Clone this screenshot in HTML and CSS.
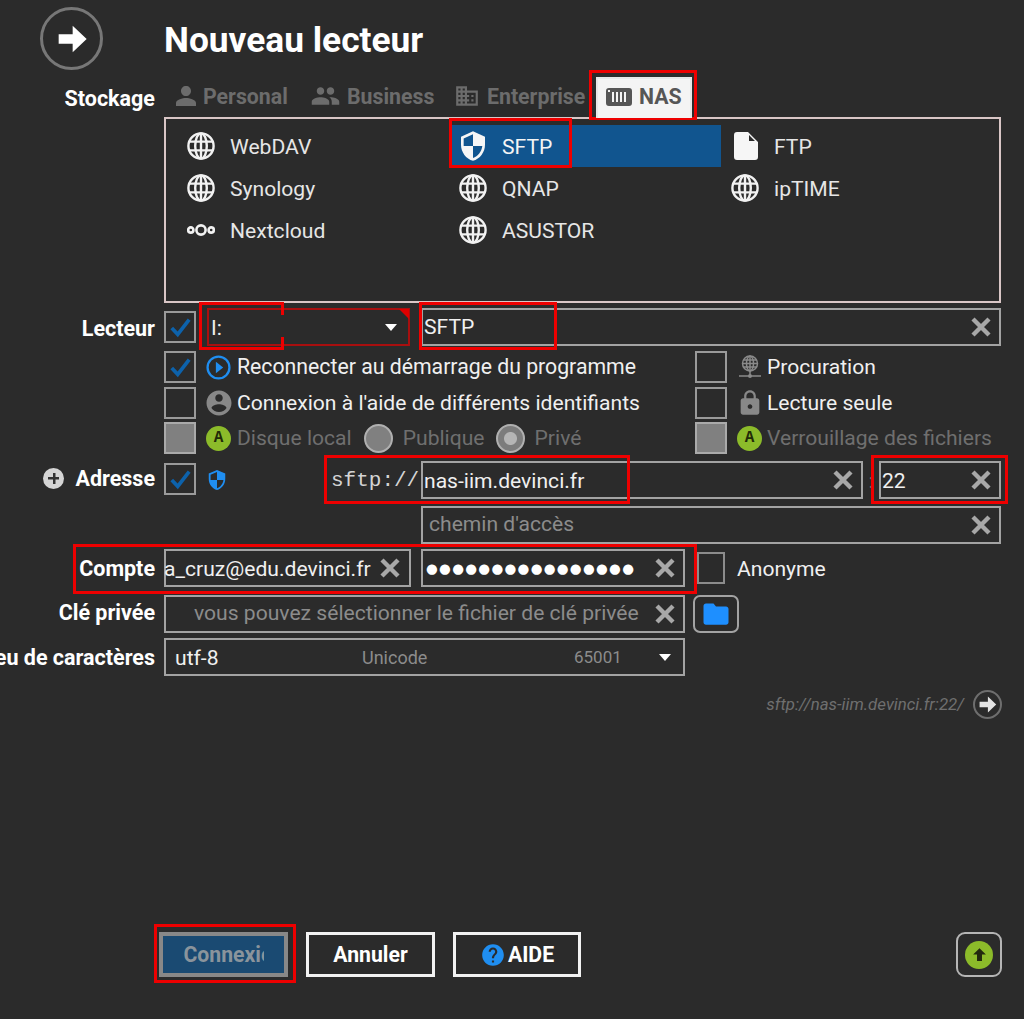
FILE: index.html
```html
<!DOCTYPE html>
<html lang="fr">
<head>
<meta charset="utf-8">
<title>Nouveau lecteur</title>
<link rel="stylesheet" href="styles.css">
</head>
<body>
<svg class="sprite" aria-hidden="true">
  <symbol id="globe" viewBox="0 0 28 28"><g fill="none" stroke="currentColor" stroke-width="2.4"><circle cx="14" cy="14" r="12.6"/><ellipse cx="14" cy="14" rx="5.8" ry="12.6"/><path d="M2 9.6h24M2 18.4h24M14 1.5v25"/></g></symbol>
  <symbol id="shield" viewBox="0 0 24 24"><path fill="currentColor" d="M12 1L3 5v6c0 5.55 3.84 10.74 9 12 5.16-1.26 9-6.45 9-12V5l-9-4zm0 10.99h7c-.53 4.12-3.28 7.79-7 8.94V12H5V6.3l7-3.11v8.8z"/></symbol>
  <symbol id="file" viewBox="0 0 24 28"><path fill="currentColor" fill-rule="evenodd" d="M3 0h11l10 10v15a3 3 0 0 1-3 3H3a3 3 0 0 1-3-3V3a3 3 0 0 1 3-3zm12 3v6h6z"/></symbol>
  <symbol id="person" viewBox="0 0 24 24"><path fill="currentColor" d="M12 12c2.900 0 5-2.100 5-5s-2.100-5-5-5-5 2.100-5 5 2.100 5 5 5zm0 2c-3.200 0-10 1.600-10 5v3h20v-3c0-3.400-6.800-5-10-5z"/></symbol>
  <symbol id="people" viewBox="0 0 24 24"><path fill="currentColor" d="M16 11c1.660 0 2.990-1.340 2.990-3S17.660 5 16 5c-1.660 0-3 1.340-3 3s1.340 3 3 3zm-8 0c1.660 0 2.990-1.340 2.990-3S9.660 5 8 5C6.340 5 5 6.340 5 8s1.340 3 3 3zm0 2c-2.330 0-7 1.170-7 3.500V19h14v-2.500c0-2.330-4.670-3.500-7-3.500zm8 0c-.29 0-.62.02-.97.05 1.160.84 1.970 1.970 1.970 3.450V19h6v-2.500c0-2.330-4.670-3.500-7-3.500z"/></symbol>
  <symbol id="domain" viewBox="0 0 24 24"><path fill="currentColor" d="M12 7V3H2v18h20V7H12zM6 19H4v-2h2v2zm0-4H4v-2h2v2zm0-4H4V9h2v2zm0-4H4V5h2v2zm4 12H8v-2h2v2zm0-4H8v-2h2v2zm0-4H8V9h2v2zm0-4H8V5h2v2zm10 12h-8v-2h2v-2h-2v-2h2v-2h-2V9h8v10zm-2-8h-2v2h2v-2zm0 4h-2v2h2v-2z"/></symbol>
  <symbol id="nas" viewBox="0 0 26 18"><path fill="currentColor" fill-rule="evenodd" d="M3 0h20a3 3 0 0 1 3 3v12a3 3 0 0 1-3 3H3a3 3 0 0 1-3-3V3a3 3 0 0 1 3-3zm3 4v10h2V4H6zm4 0v10h2V4h-2zm4 0v10h2V4h-2zm4 0v10h2V4h-2zM2 2v2h2V2H2z"/></symbol>
  <symbol id="x" viewBox="0 0 24 24"><path fill="none" stroke="currentColor" stroke-width="4.4" d="M4 4l16 16M20 4L4 20"/></symbol>
  <symbol id="check" viewBox="0 0 24 24"><path fill="none" stroke="currentColor" stroke-width="4" d="M3 13l6.500 7L22 4"/></symbol>
  <symbol id="arrow" viewBox="0 0 24 24"><path fill="currentColor" d="M2 8.500h10.500V2L23 12 12.500 22v-6.500H2z"/></symbol>
  <symbol id="up" viewBox="0 0 24 24"><path fill="currentColor" d="M12 3l9 9h-5.500v9h-7v-9H3z"/></symbol>
  <symbol id="account" viewBox="0 0 24 24"><path fill="currentColor" d="M12 2C6.480 2 2 6.480 2 12s4.480 10 10 10 10-4.480 10-10S17.520 2 12 2zm0 3c1.660 0 3 1.340 3 3s-1.340 3-3 3-3-1.340-3-3 1.340-3 3-3zm0 14.200c-2.500 0-4.710-1.280-6-3.220.03-1.990 4-3.080 6-3.080 1.990 0 5.970 1.090 6 3.080-1.290 1.940-3.500 3.220-6 3.220z"/></symbol>
  <symbol id="lock" viewBox="0 0 24 24"><path fill="currentColor" d="M18 8h-1V6c0-2.760-2.240-5-5-5S7 3.240 7 6v2H6c-1.100 0-2 .9-2 2v10c0 1.100.9 2 2 2h12c1.100 0 2-.9 2-2V10c0-1.100-.9-2-2-2zm-6 9c-1.100 0-2-.9-2-2s.9-2 2-2 2 .9 2 2-.9 2-2 2zm3.100-9H8.900V6c0-1.710 1.390-3.100 3.100-3.100 1.710 0 3.100 1.390 3.100 3.100v2z"/></symbol>
  <symbol id="folder" viewBox="0 0 24 24"><path fill="currentColor" d="M10 3.500H4c-1.100 0-2 .9-2 2v13c0 1.100.9 2 2 2h16c1.100 0 2-.9 2-2V8c0-1.100-.9-2-2-2h-8l-2-2.500z"/></symbol>
  <symbol id="help" viewBox="0 0 24 24"><path fill="currentColor" d="M12 2C6.480 2 2 6.480 2 12s4.480 10 10 10 10-4.480 10-10S17.520 2 12 2zm1 17h-2v-2h2v2zm2.070-7.750l-.9.920C13.450 12.900 13 13.500 13 15h-2v-.5c0-1.100.45-2.100 1.170-2.830l1.240-1.260c.37-.36.59-.86.59-1.410 0-1.100-.9-2-2-2s-2 .9-2 2H8c0-2.210 1.790-4 4-4s4 1.790 4 4c0 .88-.36 1.680-.93 2.250z"/></symbol>
</svg>

<div class="page">
  <header class="head">
    <span class="back"><svg class="back-icon"><use href="#arrow"/></svg></span>
    <h1 class="title">Nouveau lecteur</h1>
  </header>

  <div class="row row-tabs">
    <span class="label label-tabs">Stockage</span>
    <div class="tabs">
      <span class="tab tab-personal"><svg class="tab-icon"><use href="#person"/></svg>Personal</span>
      <span class="tab tab-business"><svg class="tab-icon tab-icon-wide"><use href="#people"/></svg>Business</span>
      <span class="tab tab-enterprise"><svg class="tab-icon tab-icon-mid"><use href="#domain"/></svg>Enterprise</span>
      <span class="tab tab-active"><svg class="tab-icon tab-icon-mid"><use href="#nas"/></svg>NAS</span>
    </div>
  </div>

  <div class="row row-panel">
    <span class="label"></span>
    <div class="panel">
      <div class="item"><span class="item-ico"><svg class="ico28"><use href="#globe"/></svg></span>WebDAV</div>
      <div class="item item-sel"><span class="item-ico"><svg class="ico-shield"><use href="#shield"/></svg></span>SFTP</div>
      <div class="item"><span class="item-ico"><svg class="ico-file"><use href="#file"/></svg></span>FTP</div>
      <div class="item"><span class="item-ico"><svg class="ico28"><use href="#globe"/></svg></span>Synology</div>
      <div class="item"><span class="item-ico"><svg class="ico28"><use href="#globe"/></svg></span>QNAP</div>
      <div class="item"><span class="item-ico"><svg class="ico28"><use href="#globe"/></svg></span>ipTIME</div>
      <div class="item"><span class="item-ico"><svg class="ico-nc" viewBox="0 0 28 12"><g fill="none" stroke="currentColor" stroke-width="2.6"><circle cx="3.800" cy="6" r="2.600"/><circle cx="14" cy="6" r="4.600"/><circle cx="24.200" cy="6" r="2.600"/></g></svg></span>Nextcloud</div>
      <div class="item"><span class="item-ico"><svg class="ico28"><use href="#globe"/></svg></span>ASUSTOR</div>
    </div>
  </div>

  <div class="row row-lecteur">
    <span class="label label-down">Lecteur</span>
    <div class="line">
      <span class="box"><svg class="tick"><use href="#check"/></svg></span>
      <div class="select select-drive"><span>I:</span><i class="caret"></i><i class="corner"></i></div>
      <div class="field field-grow"><span class="field-text field-lift">SFTP</span><svg class="clear"><use href="#x"/></svg></div>
    </div>
  </div>

  <div class="row row-opt row-opt1">
    <span class="label"></span>
    <div class="opts">
      <div class="opt"><span class="box"><svg class="tick"><use href="#check"/></svg></span>
        <svg class="opt-ico" viewBox="0 0 24 24"><circle cx="12" cy="12" r="10.500" fill="none" stroke="#1f8ef1" stroke-width="2.200"/><path d="M9.500 6.500l7 5.500-7 5.500z" fill="#1f8ef1"/></svg>
        <span class="opt-txt opt-txt-wide">Reconnecter au démarrage du programme</span></div>
      <div class="opt opt-right"><span class="box"></span>
        <svg class="opt-ico-r" viewBox="0 0 24 24"><g fill="none" stroke="#8a8a8a" stroke-width="1.500"><circle cx="12" cy="8.500" r="7.500"/><ellipse cx="12" cy="8.500" rx="3.500" ry="7.500"/><path d="M4.500 8.500h15M5.500 5h13M5.500 12h13M12 1v15M12 16v5M1 21h22"/></g><circle cx="12" cy="21" r="2" fill="#8a8a8a"/></svg>
        <span class="opt-txt">Procuration</span></div>
    </div>
  </div>

  <div class="row row-opt row-opt2">
    <span class="label"></span>
    <div class="opts">
      <div class="opt"><span class="box"></span>
        <svg class="opt-ico-account"><use href="#account"/></svg>
        <span class="opt-txt">Connexion à l'aide de différents identifiants</span></div>
      <div class="opt opt-right"><span class="box"></span>
        <svg class="opt-ico-lock"><use href="#lock"/></svg>
        <span class="opt-txt">Lecture seule</span></div>
    </div>
  </div>

  <div class="row row-opt row-opt3">
    <span class="label"></span>
    <div class="opts">
      <div class="opt opt-off"><span class="box box-off"></span>
        <span class="badge">A</span>
        <span class="opt-txt">Disque local</span>
        <span class="radio radio-first"></span><span class="opt-txt">Publique</span>
        <span class="radio radio-on"></span><span class="opt-txt">Privé</span></div>
      <div class="opt opt-off opt-right"><span class="box box-off"></span>
        <span class="badge">A</span>
        <span class="opt-txt">Verrouillage des fichiers</span></div>
    </div>
  </div>

  <div class="row row-addr">
    <span class="label label-addr"><i class="plus"></i>Adresse</span>
    <div class="line line-addr">
      <span class="box box-addr"><svg class="tick"><use href="#check"/></svg></span>
      <svg class="addr-shield"><use href="#shield"/></svg>
      <span class="scheme">sftp://</span>
      <div class="field field-grow"><span class="field-text">nas-iim.devinci.fr</span><svg class="clear"><use href="#x"/></svg></div>
      <span class="colon">:</span>
      <div class="field field-port"><span class="field-text">22</span><svg class="clear"><use href="#x"/></svg></div>
    </div>
  </div>

  <div class="row row-path">
    <span class="label"></span>
    <div class="field field-path"><span class="field-text field-ph field-ph-path">chemin d'accès</span><svg class="clear"><use href="#x"/></svg></div>
  </div>

  <div class="row row-account">
    <span class="label">Compte</span>
    <div class="line">
      <div class="field field-user"><span class="field-text field-flush">a_cruz@edu.devinci.fr</span><svg class="clear"><use href="#x"/></svg></div>
      <div class="field field-pass"><span class="dots">●●●●●●●●●●●●●●●●</span><svg class="clear"><use href="#x"/></svg></div>
      <span class="box box-anon"></span>
      <span class="anon">Anonyme</span>
    </div>
  </div>

  <div class="row row-key">
    <span class="label label-up">Clé privée</span>
    <div class="line">
      <div class="field field-key"><span class="field-text field-ph field-right">vous pouvez sélectionner le fichier de clé privée</span><svg class="clear"><use href="#x"/></svg></div>
      <span class="folder-btn"><svg class="folder"><use href="#folder"/></svg></span>
    </div>
  </div>

  <div class="row row-charset">
    <span class="label">Jeu de caractères</span>
    <div class="select select-charset">
      <span class="cs-name">utf-8</span><span class="cs-set">Unicode</span><span class="cs-code">65001</span><i class="caret"></i>
    </div>
  </div>

  <div class="link-row">
    <span class="link-text">sftp://nas-iim.devinci.fr:22/</span>
    <span class="link-go"><svg class="link-arrow"><use href="#arrow"/></svg></span>
  </div>

  <footer class="foot">
    <div class="btn btn-primary"><span class="btn-clip">Connexion</span></div>
    <div class="btn btn-cancel">Annuler</div>
    <div class="btn btn-help"><svg class="help"><use href="#help"/></svg>AIDE</div>
    <span class="upload"><span class="upload-dot"><svg class="upload-arrow"><use href="#up"/></svg></span></span>
  </footer>

  <i class="mark mark-nas"></i>
  <i class="mark mark-sftp"></i>
  <i class="mark mark-drive"></i>
  <i class="mark mark-name"></i>
  <i class="mark mark-host"></i>
  <i class="mark mark-port"></i>
  <i class="mark mark-account"></i>
  <i class="mark mark-connect"></i>
</div>
</body>
</html>
```

FILE: styles.css
```css
* { box-sizing: border-box; }
html, body { margin: 0; height: 100%; }
body {
  background: #2b2b2b;
  color: #f0f0f0;
  font-family: Roboto, "Liberation Sans", sans-serif;
  font-size: 21.1px;
  overflow: hidden;
}
.sprite { display: none; }
svg { display: block; flex: none; }
.page { position: relative; width: 1024px; height: 1019px; }

/* header */
.head { display: flex; align-items: center; height: 77px; padding: 7px 0 7px 40px; gap: 61px; }
.back {
  width: 63px; height: 63px; border: 3px solid #777; border-radius: 50%;
  display: flex; align-items: center; justify-content: center; flex: none;
}
.back-icon { width: 32px; height: 32px; color: #fff; }
.title { margin: 4px 0 0; font-size: 35.3px; font-weight: 700; color: #fff; line-height: 1; }

/* rows */
.row { display: grid; grid-template-columns: 155px 837px; column-gap: 9px; align-items: center; }
.label {
  display: flex; justify-content: flex-end; align-items: center; white-space: nowrap;
  font-weight: 700; font-size: 21.5px; color: #fff;
}
.label-down { padding-top: 2px; }
.label-up { padding-bottom: 4px; }
.line { display: flex; align-items: center; }
.row-tabs { height: 41px; position: relative; z-index: 1; }
.label-tabs { padding-top: 1px; }
.row-panel { height: 186px; margin-top: -1px; }
.row-lecteur { height: 38px; margin-top: 5px; }
.row-opt { height: 32px; }
.row-opt1 { margin-top: 5px; }
.row-opt2 { margin-top: 4px; }
.row-opt3 { margin-top: 3px; }
.row-addr { height: 38px; margin-top: 7px; }
.row-path { height: 38px; margin-top: 7px; }
.row-account { height: 38px; margin-top: 5px; }
.row-key { height: 38px; margin-top: 8px; }
.row-charset { height: 38px; margin-top: 5px; }

/* tabs */
.tabs { display: flex; height: 41px; align-items: stretch; }
.tab {
  display: flex; align-items: center; gap: 5px; padding: 0 10px 3px;
  font-weight: 700; font-size: 21.3px; color: #6c6c6c;
}
.tab-personal { width: 136px; }
.tab-business { width: 144px; gap: 6px; }
.tab-enterprise { width: 152px; gap: 7px; }
.tab-active { width: 96px; background: #f4f4f4; color: #565656; border: 2px solid #e8e8e8; border-bottom: 0; padding: 0 0 4px 8px; gap: 7px; }
.tab-icon { width: 24px; height: 26px; color: currentColor; }
.tab-icon-wide { width: 31px; height: 30px; }
.tab-icon-mid { width: 26px; height: 26px; }

/* panel */
.panel {
  height: 186px; border: 2px solid #d9c6c6; padding: 6px 0 0 12px;
  display: grid; grid-template-columns: 272px 272px 272px; grid-auto-rows: 42px; align-content: start;
}
.item { display: flex; align-items: center; color: #e6e6e6; }
.item-ico { width: 52px; padding-left: 9px; display: flex; flex: none; }
.item-sel { background: #11558f; width: 271px; color: #f4f4f4; }
.ico28 { width: 28px; height: 28px; color: #f2f2f2; }
.ico-nc { width: 28px; height: 12px; color: #f2f2f2; }
.ico-shield { width: 32px; height: 32px; margin: 0 -2px; color: #f6f6f6; }
.ico-file { width: 24px; height: 28px; margin-left: 3px; color: #f6f6f6; }

/* fields */
.box {
  width: 32px; height: 32px; border: 2px solid #9a9a9a; flex: none;
  display: flex; align-items: center; justify-content: center;
}
.box-off { background: #808080; border-color: #aaa; }
.box-addr { margin-bottom: 2px; }
.tick { width: 22px; height: 22px; color: #0d62ab; }
.field, .select {
  height: 38px; border: 2px solid #a3a3a3; display: flex; align-items: center; position: relative;
}
.field-grow { flex: 1; }
.field-text { flex: 1; padding-left: 1px; white-space: nowrap; overflow: hidden; color: #f0f0f0; }
.field-lift { padding-bottom: 2px; }
.field-ph { color: #8c8c8c; padding-bottom: 3px; }
.field-ph-path { padding-left: 6px; }
.clear { width: 24px; height: 24px; color: #a8a8a8; margin-right: 6px; margin-left: 6px; }
.select-drive { width: 203px; margin: 0 11px; padding: 0 11px 0 2px; justify-content: space-between; border-color: #a80f0f; color: #eee; }
.caret { width: 0; height: 0; border-left: 6.5px solid transparent; border-right: 6.5px solid transparent; border-top: 7px solid #fff; }
.corner { position: absolute; top: -1px; right: -1px; width: 0; height: 0; border-top: 10px solid #e00000; border-left: 10px solid transparent; }

/* options */
.opts { display: grid; grid-template-columns: 531px 306px; }
.opt { display: flex; align-items: center; height: 32px; color: #f0f0f0; white-space: nowrap; }
.opt-off { color: #6f6f6f; }
.opt-txt { padding-bottom: 2px; }
.opt-txt-wide { font-size: 21.25px; }
.opt-ico { width: 25px; height: 25px; margin: 0 6px 0 10px; }
.opt-ico-r { width: 24px; height: 24px; margin: 0 5px 0 11px; }
.opt-ico-account { width: 30px; height: 30px; margin: 0 3px 0 8px; color: #888; }
.opt-ico-lock { width: 28px; height: 28px; margin: 0 3px 0 9px; color: #888; }
.badge {
  width: 25px; height: 25px; border-radius: 50%; background: #8cbb2a; color: #222a08; flex: none;
  margin: 0 6px 0 10px; display: flex; align-items: center; justify-content: center;
  font: 700 16px "Liberation Mono", monospace;
}
.opt-right .badge { margin-right: 5px; }
.radio { width: 29px; height: 29px; border-radius: 50%; background: #808080; border: 2px solid #b0b0b0; flex: none; margin: 0 10px 0 11px; }
.radio-first { margin-left: 12px; }
.radio-on { background: radial-gradient(circle, #b5b5b5 0 6px, #7c7c7c 7px); }

/* address */
.label-addr { gap: 11px; padding-bottom: 4px; }
.plus {
  width: 21px; height: 21px; border-radius: 50%; flex: none;
  background:
    linear-gradient(#333, #333) center / 11px 2.500px no-repeat,
    linear-gradient(#333, #333) center / 2.500px 11px no-repeat,
    #d5d5d5;
}
.addr-shield { width: 22px; height: 22px; color: #1f8ef1; margin: 0 103px 0 10px; }
.scheme { font: 21px "Liberation Mono", monospace; color: #d4d4d4; width: 90px; white-space: nowrap; }
.colon { width: 16px; text-align: center; color: #6c6c6c; }
.field-port { width: 122px; }
.field-path { margin-left: 257px; width: 580px; }

/* account */
.field-user { width: 247px; }
.field-flush { padding-left: 0; text-indent: -2px; overflow: visible; }
.field-user .clear { margin-left: 0; margin-right: 7px; }
.field-pass { width: 264px; margin-left: 10px; }
.dots { flex: 1; padding-left: 3px; font: 13.5px "DejaVu Sans", sans-serif; letter-spacing: 1.3px; color: #fff; white-space: nowrap; overflow: hidden; }
.box-anon { margin-left: 12px; width: 28px; border-color: #8c8c8c; }
.anon { margin-left: 12px; color: #f0f0f0; }

/* key */
.field-key { width: 521px; }
.field-right { padding-left: 28px; }
.folder-btn {
  width: 46px; height: 38px; border: 2px solid #a3a3a3; border-radius: 7px; margin-left: 8px;
  display: flex; align-items: center; justify-content: center; flex: none;
}
.folder { width: 30px; height: 30px; color: #1e8fff; }

/* charset */
.select-charset { width: 521px; color: #f0f0f0; padding-left: 9px; }
.cs-name { width: 187px; }
.cs-set { width: 212px; font-size: 18px; color: #8c8c8c; }
.cs-code { width: 85px; font-size: 17px; color: #8c8c8c; }

/* link */
.link-row { display: flex; align-items: center; justify-content: flex-end; gap: 9px; height: 30px; margin-top: 13px; padding-right: 22px; }
.link-text { font-size: 16.85px; font-style: italic; color: #6f6f6f; }
.link-go { width: 29px; height: 29px; border: 2px solid #6e6e6e; border-radius: 50%; display: flex; align-items: center; justify-content: center; }
.link-arrow { width: 19px; height: 19px; color: #e4e4e4; }

/* footer */
.foot { display: flex; align-items: center; margin-top: 213px; height: 45px; padding-left: 159px; }
.btn {
  height: 45px; display: flex; align-items: center; justify-content: center;
  font-weight: 700; font-size: 21.2px; color: #fff; border: 3px solid #f2f2f2; flex: none;
}
.btn-primary { width: 129px; background: #1a4a72; border: 4px solid #888; color: #8a949c; }
.btn-clip { width: 80px; overflow: hidden; white-space: nowrap; display: block; }
.btn-cancel { width: 129px; margin-left: 18px; }
.btn-help { width: 128px; margin-left: 18px; gap: 2px; }
.help { width: 26px; height: 26px; color: #1f8ef1; }
.upload {
  width: 46px; height: 45px; margin-left: 375px; border: 2px solid #b5b5b5; border-radius: 9px;
  display: flex; align-items: center; justify-content: center; flex: none;
}
.upload-dot { width: 28px; height: 28px; border-radius: 50%; background: #8cbb2a; display: flex; align-items: center; justify-content: center; }
.upload-arrow { width: 17px; height: 17px; color: #22280f; }

/* red annotations drawn over the screenshot */
.mark { position: absolute; border: 3px solid #ee0000; pointer-events: none; }
.mark-nas { left: 589px; top: 70px; width: 108px; height: 50px; }
.mark-sftp { left: 449px; top: 118px; width: 123px; height: 50px; }
.mark-drive { left: 199px; top: 302px; width: 85px; height: 48px; border-right: 0; }
.mark-drive::before, .mark-drive::after { content: ""; position: absolute; right: 0; width: 3px; height: 10px; background: #ee0000; }
.mark-drive::before { top: 0; }
.mark-drive::after { bottom: 0; }
.mark-name { left: 419px; top: 302px; width: 138px; height: 48px; }
.mark-host { left: 324px; top: 455px; width: 306px; height: 49px; }
.mark-port { left: 871px; top: 455px; width: 137px; height: 49px; }
.mark-account { left: 73px; top: 544px; width: 624px; height: 50px; }
.mark-connect { left: 154px; top: 924px; width: 142px; height: 59px; }
```
